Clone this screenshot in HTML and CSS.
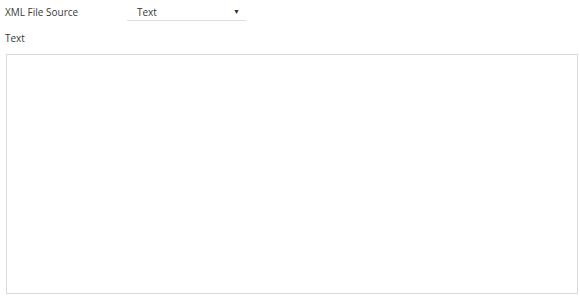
FILE: index.html
```html
<!DOCTYPE html>
<html>
<head>
<meta charset="utf-8">
<title>XML File Source</title>
<link rel="stylesheet" href="styles.css">
</head>
<body>
	<div class="form">
		<div class="row">
			<label class="field-label" for="source">XML File Source</label>
			<div class="select-box">
				<span class="select-value">Text</span>
				<span class="select-arrow">&#9660;</span>
			</div>
		</div>
		<div class="text-label">Text</div>
		<textarea class="xml-text" id="xml-text"></textarea>
	</div>
</body>
</html>
```

FILE: styles.css
```css
body {
	margin: 0;
	background: #fff;
	font-family: "Open Sans", sans-serif;
	font-size: 10px;
	color: #3a3a3a;
}

.form {
	padding: 4px 3px 0 5px;
}

.row {
	display: flex;
	align-items: flex-start;
	height: 22px;
}

.field-label {
	width: 122px;
	line-height: 16px;
}

.select-box {
	width: 119px;
	height: 17px;
	border-bottom: 1px solid #ddd;
	display: flex;
	justify-content: space-between;
	padding: 0 6px 0 10px;
	box-sizing: border-box;
	line-height: 16px;
}

.select-arrow {
	font-size: 7px;
	color: #333;
}

.text-label {
	margin-top: 4px;
	line-height: 16px;
}

.xml-text {
	display: block;
	margin: 8px 0 0 1px;
	width: 572px;
	height: 240px;
	border: 1px solid #d9d9d9;
	box-sizing: border-box;
	resize: none;
	outline: none;
}
```
